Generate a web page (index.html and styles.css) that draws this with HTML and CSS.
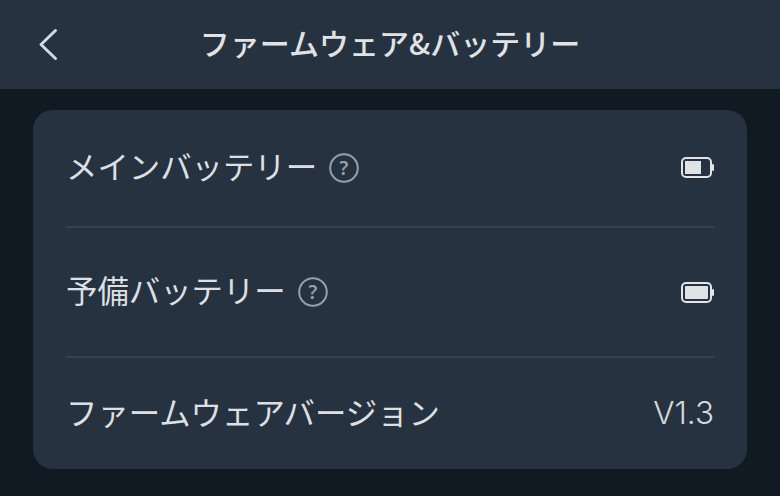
FILE: index.html
```html
<!DOCTYPE html>
<html lang="ja">
<head>
  <meta charset="UTF-8" />
  <title>ファームウェア&amp;バッテリー</title>
  <link rel="stylesheet" href="styles.css">
</head>
<body>
  <div class="header">
    <svg class="back" width="24" height="36" viewBox="0 0 24 36">
      <path d="M19.5 4.5 L5 18.5 L19.5 32.5" fill="none" stroke="#d5d9de" stroke-width="3" stroke-linecap="round" stroke-linejoin="round"/>
    </svg>
    <h1 class="title">ファームウェア&amp;バッテリー</h1>
  </div>

  <div class="card">
    <div class="row row-main">
      <div class="label">
        <span class="label-text">メインバッテリー</span>
        <svg class="help" width="30" height="30" viewBox="0 0 30 30">
          <circle cx="15" cy="15" r="13.8" fill="none" stroke="#9a9fa5" stroke-width="2"/>
          <text x="15" y="21.5" text-anchor="middle" class="help-mark">?</text>
        </svg>
      </div>
      <svg class="battery" width="33" height="21" viewBox="0 0 33 21">
        <rect x="1" y="1" width="29" height="19" rx="4" fill="none" stroke="#e1e4e8" stroke-width="2"/>
        <rect x="31" y="7" width="2" height="7" rx="1" fill="#e1e4e8"/>
        <rect x="4" y="4" width="16" height="13" fill="#dfe2e6"/>
      </svg>
    </div>

    <div class="row row-backup">
      <div class="label">
        <span class="label-text">予備バッテリー</span>
        <svg class="help" width="30" height="30" viewBox="0 0 30 30">
          <circle cx="15" cy="15" r="13.8" fill="none" stroke="#9a9fa5" stroke-width="2"/>
          <text x="15" y="21.5" text-anchor="middle" class="help-mark">?</text>
        </svg>
      </div>
      <svg class="battery" width="33" height="21" viewBox="0 0 33 21">
        <rect x="1" y="1" width="29" height="19" rx="4" fill="none" stroke="#e1e4e8" stroke-width="2"/>
        <rect x="31" y="7" width="2" height="7" rx="1" fill="#e1e4e8"/>
        <rect x="4" y="4" width="23" height="13" rx="1" fill="#dfe2e6"/>
      </svg>
    </div>

    <div class="row row-version">
      <div class="label"><span class="label-text">ファームウェアバージョン</span></div>
      <div class="value">V1.3</div>
    </div>
  </div>
</body>
</html>
```

FILE: styles.css
```css
* {
  box-sizing: border-box;
}
html, body {
  margin: 0;
  height: 100%;
}
body {
  width: 780px;
  height: 496px;
  overflow: hidden;
  background: #111923;
  font-family: "Noto Sans CJK JP", "Noto Sans", sans-serif;
  color: #dcdfe3;
}
.header {
  height: 89px;
  background: #263240;
  display: flex;
  align-items: center;
  justify-content: center;
  position: relative;
}
.back {
  position: absolute;
  left: 36px;
  top: 26px;
}
.title {
  margin: 0 0 6px;
  font-size: 30px;
  font-weight: 500;
  color: #e0e2e5;
}
.card {
  margin: 21px 33px 0;
  height: 359px;
  background: #263240;
  border-radius: 20px;
  padding: 0 33px;
}
.row {
  display: flex;
  align-items: center;
  justify-content: space-between;
  border-bottom: 2px solid #364250;
}
.row-main {
  height: 118px;
  padding-bottom: 1px;
}
.row-backup {
  height: 130px;
}
.row-version {
  height: 111px;
  border-bottom: none;
}
.label {
  display: flex;
  align-items: center;
  gap: 12px;
  font-size: 31.4px;
  line-height: 40px;
}
.label-text {
  padding-bottom: 4px;
}
.value {
  font-size: 31.5px;
  line-height: 40px;
  padding-bottom: 2px;
  font-family: "Inter", "Noto Sans", sans-serif;
  font-weight: 300;
  color: #d5d8dc;
}
.help-mark {
  font-family: "Noto Sans", sans-serif;
  font-size: 19px;
  font-weight: 600;
  fill: #9a9fa5;
}
```
